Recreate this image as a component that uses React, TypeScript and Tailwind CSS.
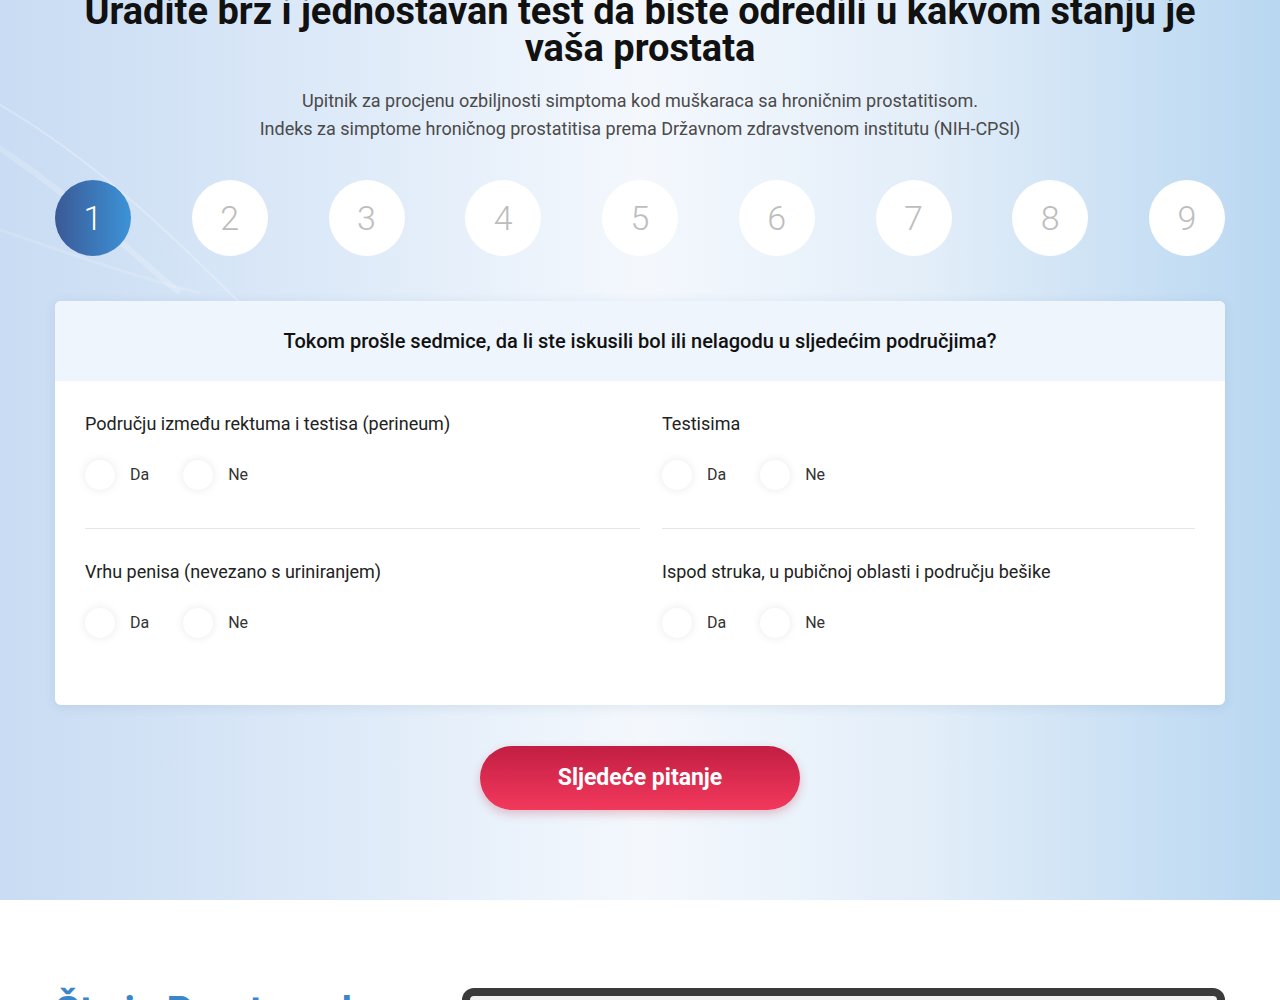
import React, { useState } from "react";

const font = { fontFamily: "Roboto, 'Noto Sans', sans-serif" };

const steps = [1, 2, 3, 4, 5, 6, 7, 8, 9];

const questions = [
  { id: "perineum", label: "Području između rektuma i testisa (perineum)" },
  { id: "testisi", label: "Testisima" },
  { id: "penis", label: "Vrhu penisa (nevezano s uriniranjem)" },
  { id: "besika", label: "Ispod struka, u pubičnoj oblasti i području bešike" },
];

const Radio: React.FC<{ label: string; checked: boolean; onClick: () => void }> = ({
  label,
  checked,
  onClick,
}) => (
  <button type="button" onClick={onClick} className="flex items-center gap-[15px] cursor-pointer">
    <span className="w-[30px] h-[30px] rounded-full bg-white shadow-[0_0_10px_rgba(0,0,0,0.09)] flex items-center justify-center">
      {checked && <span className="w-3 h-3 rounded-full bg-[#3d86cc]" />}
    </span>
    <span className="text-[16px] text-[#333]">{label}</span>
  </button>
);

export default function App() {
  const [answers, setAnswers] = useState<Record<string, string>>({});
  const current = 1;

  return (
    <div style={font} className="min-h-screen bg-white overflow-hidden">
      <section className="relative bg-[linear-gradient(90deg,#c9dcf3_0%,#dce9f8_25%,#f4f8fd_50%,#e3eef9_72%,#b9d7f1_100%)] pb-[90px]">
        {/* faint light streaks in the corner */}
        <svg
          className="absolute left-0 top-0 w-[700px] h-[400px] pointer-events-none"
          viewBox="0 0 700 400"
          fill="none"
        >
          <path d="M-40 90 C 80 150, 170 240, 260 330" stroke="rgba(255,255,255,0.25)" strokeWidth="2" />
          <path d="M-40 130 C 60 190, 120 250, 180 300" stroke="rgba(255,255,255,0.18)" strokeWidth="6" />
          <path d="M-20 230 C 40 250, 120 280, 200 300" stroke="rgba(255,255,255,0.15)" strokeWidth="3" />
        </svg>

        <div className="relative w-[1170px] mx-auto">
          <h1 className="-mt-[7px] text-center text-[38px] leading-[37px] font-bold text-[#111]">
            Uradite brz i jednostavan test da biste odredili u kakvom stanju je vaša prostata
          </h1>
          <p className="mt-[20px] text-center text-[18px] leading-[28px] text-[#4a4a4a]">
            Upitnik za procjenu ozbiljnosti simptoma kod muškaraca sa hroničnim prostatitisom.
            <br />
            Indeks za simptome hroničnog prostatitisa prema Državnom zdravstvenom institutu (NIH-CPSI)
          </p>

          <div className="mt-[37px] flex justify-between">
            {steps.map((n) => (
              <div
                key={n}
                className={
                  n === current
                    ? "w-[76px] h-[76px] rounded-full flex items-center justify-center text-[34px] font-light text-white bg-[linear-gradient(90deg,#3b5996_0%,#3c93d7_100%)]"
                    : "w-[76px] h-[76px] rounded-full flex items-center justify-center text-[34px] font-light text-[#bdbdbd] bg-white"
                }
              >
                {n}
              </div>
            ))}
          </div>

          <div className="mt-[45px] bg-white rounded-[6px] shadow-[0_2px_12px_rgba(40,80,130,0.1)] overflow-hidden">
            <div className="h-[80px] bg-[#eef5fc] flex items-center justify-center text-[20px] font-medium text-[#111]">
              Tokom prošle sedmice, da li ste iskusili bol ili nelagodu u sljedećim područjima?
            </div>
            <div className="grid grid-cols-[555px_533px] gap-x-[22px] px-[30px] pb-[29px]">
              {questions.map((q, i) => (
                <div
                  key={q.id}
                  className={
                    i < 2
                      ? "pt-[31px] pb-[38px] border-b border-[#e6e6e6]"
                      : "pt-[31px] pb-[38px]"
                  }
                >
                  <div className="text-[18px] leading-[24px] text-[#222]">{q.label}</div>
                  <div className="mt-[24px] flex items-center gap-[34px]">
                    {["Da", "Ne"].map((opt) => (
                      <Radio
                        key={opt}
                        label={opt}
                        checked={answers[q.id] === opt}
                        onClick={() => setAnswers({ ...answers, [q.id]: opt })}
                      />
                    ))}
                  </div>
                </div>
              ))}
            </div>
          </div>

          <div className="mt-[41px] flex justify-center">
            <button
              type="button"
              className="w-[320px] h-[64px] rounded-full bg-[linear-gradient(180deg,#c21e43_0%,#f2395c_100%)] text-white text-[23px] font-bold shadow-[0_4px_10px_rgba(180,30,60,0.25)]"
            >
              Sljedeće pitanje
            </button>
          </div>
        </div>
      </section>

      <section className="w-[1170px] mx-auto pt-[88px] flex gap-[30px]">
        <div className="w-[377px] shrink-0">
          <h2 className="text-[40px] leading-[48px] font-bold text-[#3a86c8]">Šta je Prostamol</h2>
        </div>
        <div className="flex-1 h-[340px] rounded-[12px] border-[8px] border-[#3a3a3a] bg-[#f2f2f2]" />
      </section>
    </div>
  );
}
